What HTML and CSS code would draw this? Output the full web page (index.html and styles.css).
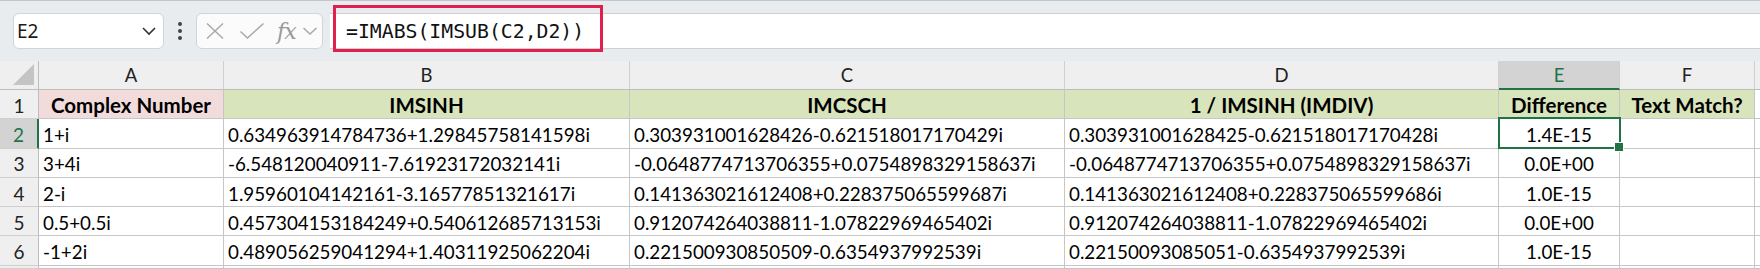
FILE: index.html
```html
<!DOCTYPE html>
<html>
    <head>
        <link rel="stylesheet" href="styles.css">
    </head>

    <body>
        <div class="formula-bar">
            <div class="name-box">
                <span>E2</span>
                <svg width="16" height="10" viewBox="0 0 16 10"><path d="M2 2 L8 8 L14 2" fill="none" stroke="#333" stroke-width="1.6"/></svg>
            </div>
            <div class="more">
                <svg width="6" height="20" viewBox="0 0 6 20"><circle cx="3" cy="3" r="2" fill="#444"/><circle cx="3" cy="10" r="2" fill="#444"/><circle cx="3" cy="17" r="2" fill="#444"/></svg>
            </div>
            <div class="fx-box">
                <svg class="icon-x" width="20" height="18" viewBox="0 0 20 18"><path d="M2 1.5 L18 16.5 M18 1.5 L2 16.5" fill="none" stroke="#a8a8a8" stroke-width="1.5"/></svg>
                <svg class="icon-check" width="26" height="18" viewBox="0 0 26 18"><path d="M1.5 9.5 L8.5 16 L24.5 1.5" fill="none" stroke="#a8a8a8" stroke-width="1.5"/></svg>
                <span class="fx">fx</span>
                <svg class="icon-down" width="16" height="10" viewBox="0 0 16 10"><path d="M1.5 2 L8 8 L14.5 2" fill="none" stroke="#a8a8a8" stroke-width="1.5"/></svg>
            </div>
            <div class="formula-input">
                <span>=IMABS(IMSUB(C2,D2))</span>
                <div class="highlight"></div>
            </div>
        </div>

        <div class="sheet">
            <div class="corner"><svg width="21" height="21" viewBox="0 0 21 21"><polygon points="21,0 21,21 0,21" fill="#c4c4c4"/></svg></div>
            <div class="col-head">A</div>
            <div class="col-head">B</div>
            <div class="col-head">C</div>
            <div class="col-head">D</div>
            <div class="col-head active">E</div>
            <div class="col-head">F</div>
            <div class="col-head"></div>

            <div class="row-head">1</div>
            <div class="cell title pink">Complex Number</div>
            <div class="cell title green">IMSINH</div>
            <div class="cell title green">IMCSCH</div>
            <div class="cell title green">1 / IMSINH (IMDIV)</div>
            <div class="cell title green">Difference</div>
            <div class="cell title green">Text Match?</div>
            <div class="cell"></div>

            <div class="row-head active">2</div>
            <div class="cell">1+i</div>
            <div class="cell">0.634963914784736+1.29845758141598i</div>
            <div class="cell">0.303931001628426-0.621518017170429i</div>
            <div class="cell">0.303931001628425-0.621518017170428i</div>
            <div class="cell num selected">1.4E-15</div>
            <div class="cell"></div>
            <div class="cell"></div>

            <div class="row-head">3</div>
            <div class="cell">3+4i</div>
            <div class="cell">-6.548120040911-7.61923172032141i</div>
            <div class="cell">-0.0648774713706355+0.0754898329158637i</div>
            <div class="cell">-0.0648774713706355+0.0754898329158637i</div>
            <div class="cell num">0.0E+00</div>
            <div class="cell"></div>
            <div class="cell"></div>

            <div class="row-head">4</div>
            <div class="cell">2-i</div>
            <div class="cell">1.95960104142161-3.16577851321617i</div>
            <div class="cell">0.141363021612408+0.228375065599687i</div>
            <div class="cell">0.141363021612408+0.228375065599686i</div>
            <div class="cell num">1.0E-15</div>
            <div class="cell"></div>
            <div class="cell"></div>

            <div class="row-head">5</div>
            <div class="cell">0.5+0.5i</div>
            <div class="cell">0.457304153184249+0.540612685713153i</div>
            <div class="cell">0.912074264038811-1.07822969465402i</div>
            <div class="cell">0.912074264038811-1.07822969465402i</div>
            <div class="cell num">0.0E+00</div>
            <div class="cell"></div>
            <div class="cell"></div>

            <div class="row-head">6</div>
            <div class="cell">-1+2i</div>
            <div class="cell">0.489056259041294+1.40311925062204i</div>
            <div class="cell">0.221500930850509-0.6354937992539i</div>
            <div class="cell">0.22150093085051-0.6354937992539i</div>
            <div class="cell num">1.0E-15</div>
            <div class="cell"></div>
            <div class="cell"></div>

            <div class="row-head"></div>
            <div class="cell"></div>
            <div class="cell"></div>
            <div class="cell"></div>
            <div class="cell"></div>
            <div class="cell"></div>
            <div class="cell"></div>
            <div class="cell"></div>
        </div>
    </body>
</html>
```

FILE: styles.css
```css
* {
    box-sizing: border-box;
}

body {
    margin: 0;
    width: 1760px;
    height: 269px;
    overflow: hidden;
    background: #fff;
    font-family: Lato, "Liberation Sans", sans-serif;
    color: #000;
}

/* formula bar */

.formula-bar {
    display: flex;
    align-items: flex-start;
    height: 61px;
    padding: 12px 0 0 13px;
    background: #e9ecef;
    border-top: 1px solid #c3c7cb;
}

.name-box {
    display: flex;
    align-items: center;
    justify-content: space-between;
    width: 151px;
    height: 36px;
    padding: 0 6px 0 3px;
    background: #fff;
    border: 1px solid #d1d5d9;
    border-radius: 6px;
    font-family: "Noto Sans", sans-serif;
    font-size: 19px;
    color: #1a1a1a;
}

.more {
    display: flex;
    align-items: center;
    justify-content: center;
    width: 32px;
    height: 36px;
}

.fx-box {
    display: flex;
    align-items: center;
    width: 127px;
    height: 36px;
    padding-left: 8px;
    background: #fbfbfb;
    border: 1px solid #d1d5d9;
    border-radius: 6px;
}

.icon-check {
    margin-left: 14px;
}

.fx {
    margin-left: 12px;
    font-family: "DejaVu Serif", serif;
    font-style: italic;
    font-size: 22px;
    color: #9a9a9a;
    letter-spacing: -1px;
}

.icon-down {
    margin-left: 6px;
}

.formula-input {
    position: relative;
    display: flex;
    align-items: center;
    flex: 1;
    height: 36px;
    margin-left: 7px;
    padding-left: 16px;
    background: #fff;
    border-top: 1px solid #cfcfcf;
    border-bottom: 1px solid #cfcfcf;
    font-family: "DejaVu Sans Mono", monospace;
    font-size: 19.8px;
    color: #111;
}

.highlight {
    position: absolute;
    left: 3px;
    top: -9px;
    width: 270px;
    height: 47px;
    border: 3px solid #e2204f;
}

/* sheet */

.sheet {
    display: grid;
    grid-template-columns: 39px 185px 406px 435px 434px 121px 135px 1fr;
    grid-template-rows: 29px repeat(6, 29.3px) 1fr;
    height: 208px;
}

.corner {
    display: flex;
    align-items: flex-end;
    justify-content: flex-end;
    padding: 0 4px 4px 0;
    background: #efefef;
    border-right: 1px solid #bdbdbd;
    border-bottom: 1px solid #bdbdbd;
}

.col-head {
    display: flex;
    align-items: center;
    justify-content: center;
    background: #efefef;
    border-right: 1px solid #d0d0d0;
    border-bottom: 1px solid #bdbdbd;
    font-size: 18.5px;
    color: #222;
}

.col-head.active {
    background: #d3d3d3;
    border-bottom: 2px solid #217346;
    color: #217346;
}

.row-head {
    display: flex;
    align-items: center;
    justify-content: center;
    padding-top: 2px;
    background: #efefef;
    border-right: 1px solid #bdbdbd;
    border-bottom: 1px solid #d0d0d0;
    font-size: 19px;
    color: #222;
}

.row-head.active {
    background: #d3d3d3;
    border-right: 2px solid #217346;
    color: #217346;
}

.cell {
    display: flex;
    align-items: center;
    padding: 2px 4px 0;
    border-right: 1px solid #c6c6c6;
    border-bottom: 1px solid #c6c6c6;
    font-size: 18.8px;
    white-space: nowrap;
    overflow: hidden;
}

.cell.title {
    justify-content: center;
    font-weight: bold;
    font-size: 20.5px;
}

.cell.pink {
    background: #f2dcdb;
}

.cell.green {
    background: #d8e4bc;
}

.cell.num {
    justify-content: center;
}

.cell.selected {
    position: relative;
    overflow: visible;
    z-index: 1;
}

.cell.selected::after {
    content: "";
    position: absolute;
    left: -1px;
    top: -2px;
    right: -2px;
    bottom: -1px;
    border: 2px solid #217346;
}

.cell.selected::before {
    content: "";
    position: absolute;
    right: -5px;
    bottom: -4px;
    width: 8px;
    height: 8px;
    background: #217346;
    border: 1px solid #fff;
    z-index: 2;
}
```
